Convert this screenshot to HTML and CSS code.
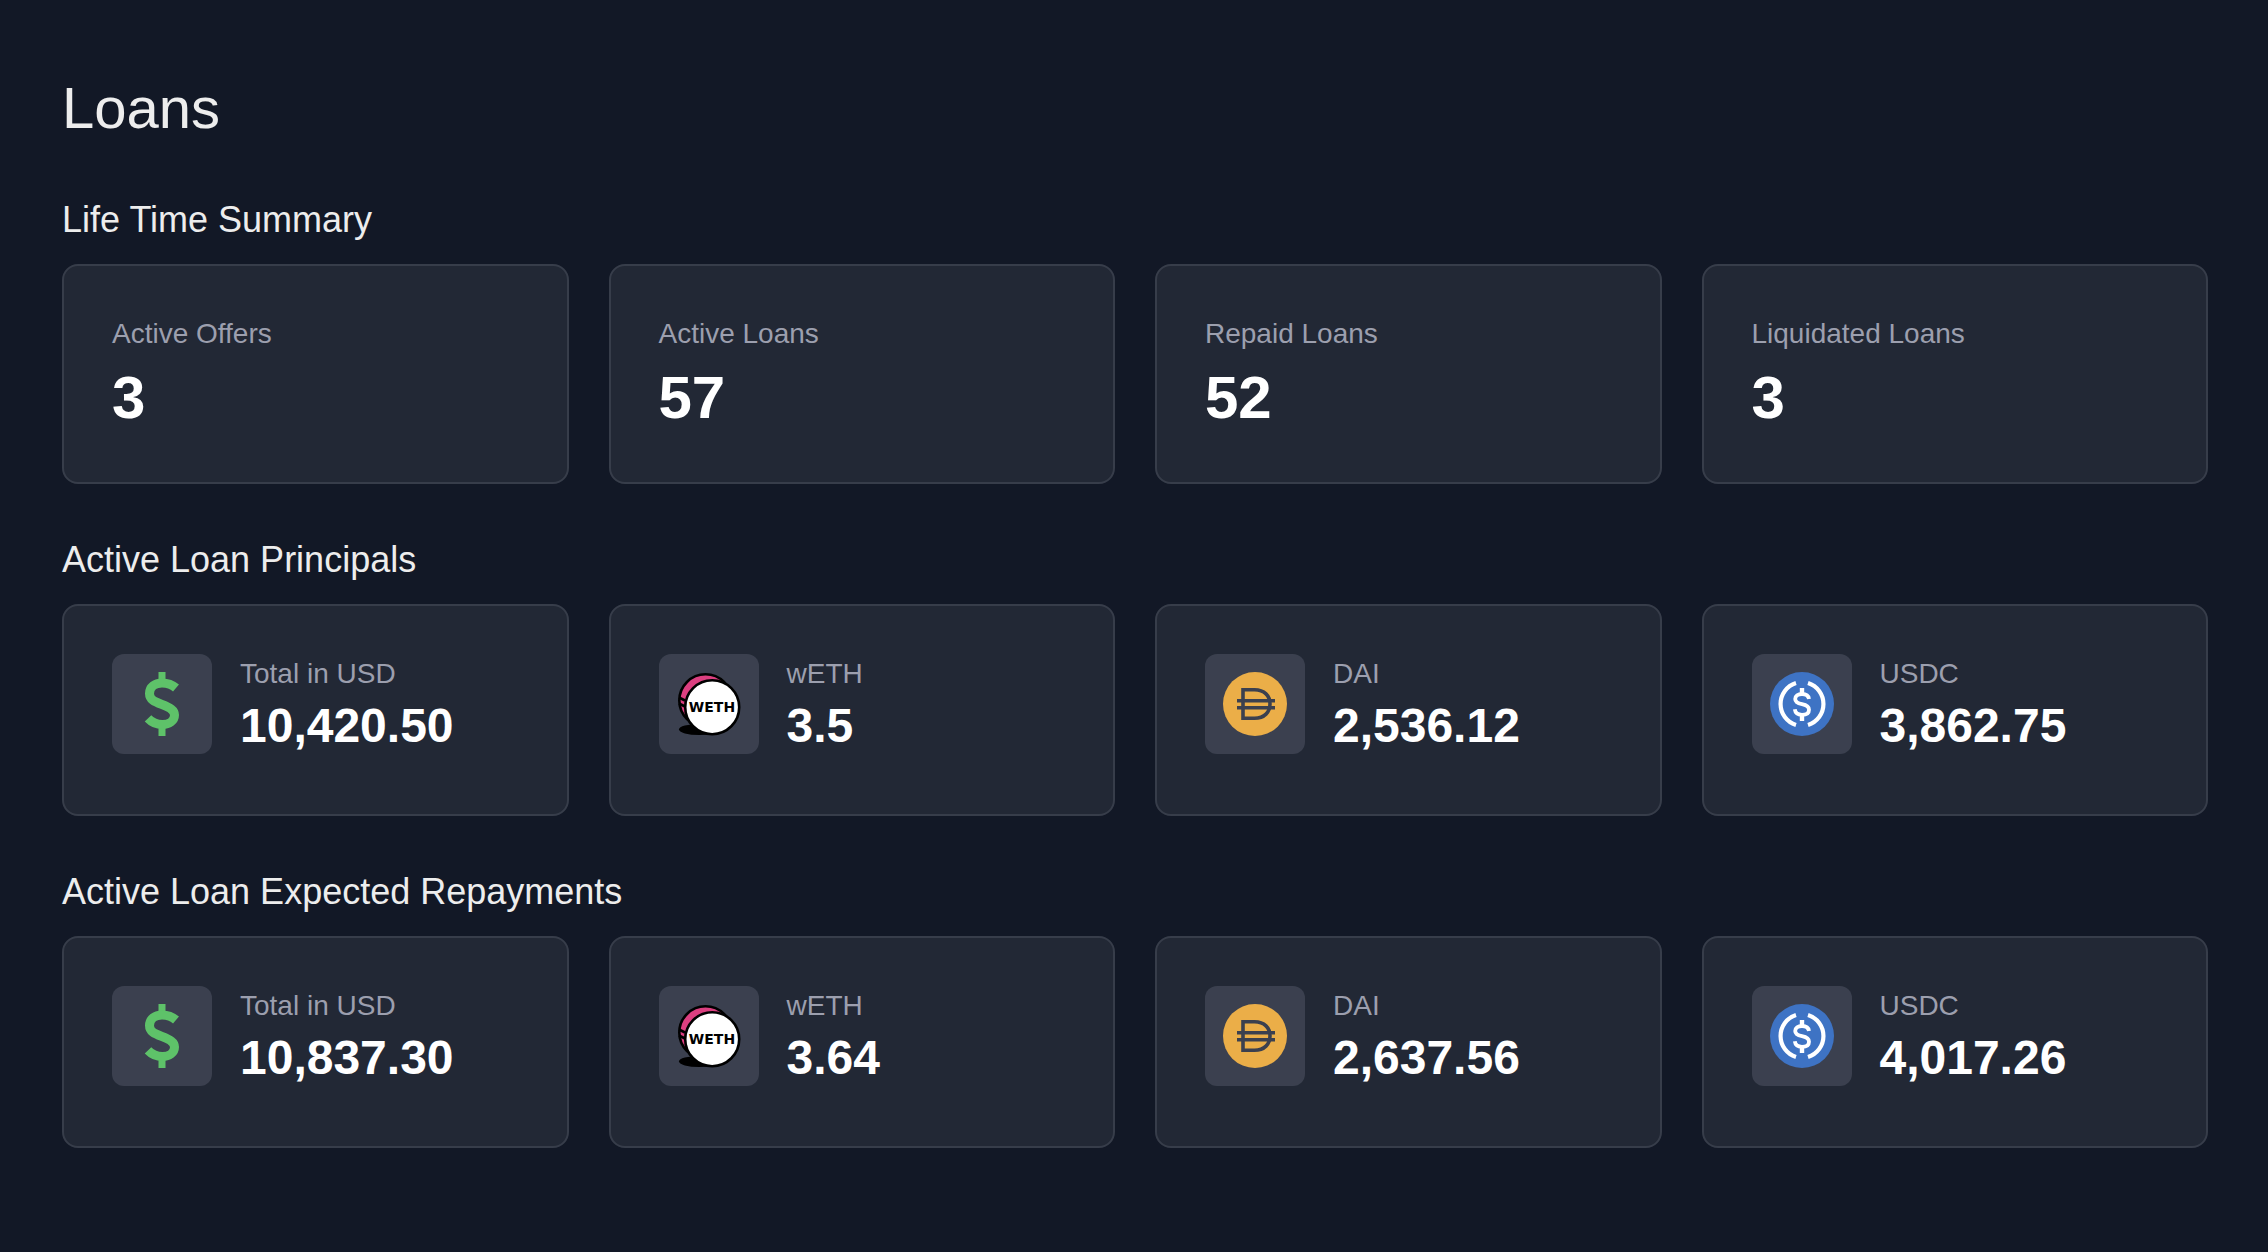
FILE: index.html
```html
<!DOCTYPE html>
<html lang="en">
<head>
<meta charset="utf-8">
<meta name="viewport" content="width=device-width, initial-scale=1">
<title>Loans</title>
<link rel="stylesheet" href="styles.css">
</head>
<body>
<svg class="sprite" aria-hidden="true">
  <symbol id="icon-usd" viewBox="0 0 64 64">
    <path d="M32 0v10M32 54v10" stroke="#5ec269" stroke-width="7" fill="none"/>
    <path d="M46 16C42 12.5 37 11 32 11C25 11 19.500 15 19.500 21.500C19.500 27.500 24 29.500 32 32.500C40 35.500 44.500 38 44.500 43C44.500 49 39 52.500 32.500 52.500C26.500 52.500 22 50.500 18 46.300" stroke="#5ec269" stroke-width="9" fill="none"/>
  </symbol>
  <symbol id="icon-weth" viewBox="0 0 64 64">
    <ellipse cx="22" cy="57.500" rx="20" ry="5.500" fill="#000"/>
    <circle cx="28.500" cy="28.500" r="26.200" fill="#dc3f80" stroke="#000" stroke-width="2.600"/>
    <path d="M2 25.500l6 3M2 31.500l6 3" stroke="#000" stroke-width="2.600"/>
    <circle cx="35.200" cy="35.200" r="27" fill="#fff" stroke="#000" stroke-width="2.600"/>
  </symbol>
  <symbol id="icon-dai" viewBox="0 0 64 64">
    <circle cx="32" cy="32" r="32" fill="#ebae48"/>
    <path d="M20 17.700h11.500C41.500 17.700 47 24 47 32S41.500 46.300 31.500 46.300H20z" stroke="#3b404f" stroke-width="3.600" fill="none"/>
    <path d="M14 28.700h38M14 35.800h38" stroke="#3b404f" stroke-width="3.400"/>
  </symbol>
  <symbol id="icon-usdc" viewBox="0 0 64 64">
    <circle cx="32" cy="32" r="32" fill="#3e73c4"/>
    <path d="M26 11A22 22 0 0 0 26 53M38 11A22 22 0 0 1 38 53" stroke="#fff" stroke-width="4.200" fill="none"/>
    <path d="M32 16v6M32 43v6" stroke="#fff" stroke-width="4.400"/>
    <path d="M39 27C38.500 23.500 36 22 32 22C28 22 25.200 23.800 25.200 27C25.200 30.200 27.500 31.300 32 32.200C36.500 33.100 39 34.300 39 37.700C39 41 36.200 42.800 32 42.800C28 42.800 25.300 41 24.800 37.300" stroke="#fff" stroke-width="3.800" fill="none"/>
  </symbol>
</svg>
<main class="page">
  <h1 class="page-title">Loans</h1>

  <section class="group">
    <h2 class="group-title">Life Time Summary</h2>
    <div class="cards">
      <dl class="card"><dt class="label">Active Offers</dt><dd class="count">3</dd></dl>
      <dl class="card"><dt class="label">Active Loans</dt><dd class="count">57</dd></dl>
      <dl class="card"><dt class="label">Repaid Loans</dt><dd class="count">52</dd></dl>
      <dl class="card"><dt class="label">Liquidated Loans</dt><dd class="count">3</dd></dl>
    </div>
  </section>

  <section class="group">
    <h2 class="group-title">Active Loan Principals</h2>
    <div class="cards">
      <div class="card token"><span class="tile"><svg class="icon"><use href="#icon-usd"/></svg></span><dl class="figures"><dt class="label">Total in USD</dt><dd class="amount">10,420.50</dd></dl></div>
      <div class="card token"><span class="tile"><svg class="icon" viewBox="0 0 64 64"><use href="#icon-weth"/><text class="coin-text" x="35" y="40" text-anchor="middle">WETH</text></svg></span><dl class="figures"><dt class="label">wETH</dt><dd class="amount">3.5</dd></dl></div>
      <div class="card token"><span class="tile"><svg class="icon"><use href="#icon-dai"/></svg></span><dl class="figures"><dt class="label">DAI</dt><dd class="amount">2,536.12</dd></dl></div>
      <div class="card token"><span class="tile"><svg class="icon"><use href="#icon-usdc"/></svg></span><dl class="figures"><dt class="label">USDC</dt><dd class="amount">3,862.75</dd></dl></div>
    </div>
  </section>

  <section class="group">
    <h2 class="group-title">Active Loan Expected Repayments</h2>
    <div class="cards">
      <div class="card token"><span class="tile"><svg class="icon"><use href="#icon-usd"/></svg></span><dl class="figures"><dt class="label">Total in USD</dt><dd class="amount">10,837.30</dd></dl></div>
      <div class="card token"><span class="tile"><svg class="icon" viewBox="0 0 64 64"><use href="#icon-weth"/><text class="coin-text" x="35" y="40" text-anchor="middle">WETH</text></svg></span><dl class="figures"><dt class="label">wETH</dt><dd class="amount">3.64</dd></dl></div>
      <div class="card token"><span class="tile"><svg class="icon"><use href="#icon-dai"/></svg></span><dl class="figures"><dt class="label">DAI</dt><dd class="amount">2,637.56</dd></dl></div>
      <div class="card token"><span class="tile"><svg class="icon"><use href="#icon-usdc"/></svg></span><dl class="figures"><dt class="label">USDC</dt><dd class="amount">4,017.26</dd></dl></div>
    </div>
  </section>
</main>
</body>
</html>
```
FILE: styles.css
```css
* {
  box-sizing: border-box;
}

body {
  margin: 0;
  min-height: 100vh;
  background: #121826;
  color: #ededed;
  font-family: "Liberation Sans", Arial, Helvetica, sans-serif;
}

h1,
h2,
dl,
dd {
  margin: 0;
}

.sprite {
  display: block;
  width: 0;
  height: 0;
}

.page {
  display: flex;
  flex-direction: column;
  gap: 52px;
  padding: 72px 60px 72px 62px;
}

.page-title {
  font-size: 58px;
  line-height: 72px;
  font-weight: 400;
}

.group {
  display: flex;
  flex-direction: column;
  gap: 20px;
}

.group-title {
  font-size: 36px;
  line-height: 48px;
  font-weight: 400;
}

.cards {
  display: grid;
  grid-template-columns: repeat(4, minmax(0, 1fr));
  gap: 40px;
}

.card {
  padding: 48px;
  border: 2px solid #373d4a;
  border-radius: 16px;
  background: #222835;
}

.token {
  display: flex;
  align-items: flex-start;
  gap: 28px;
}

.tile {
  display: flex;
  flex: none;
  padding: 18px;
  border-radius: 12px;
  background: #3b404f;
}

.icon {
  width: 64px;
  height: 64px;
}

.figures {
  padding-bottom: 8px;
}

.label {
  font-size: 28px;
  line-height: 40px;
  color: #9c9fae;
}

.count {
  margin-top: 8px;
  font-size: 60px;
  line-height: 72px;
  font-weight: 700;
  color: #fff;
}

.amount {
  font-size: 48px;
  line-height: 64px;
  font-weight: 700;
  color: #fff;
}

.coin-text {
  font-family: "DejaVu Sans", sans-serif;
  font-size: 14px;
  font-weight: 700;
  fill: #000;
}
```
